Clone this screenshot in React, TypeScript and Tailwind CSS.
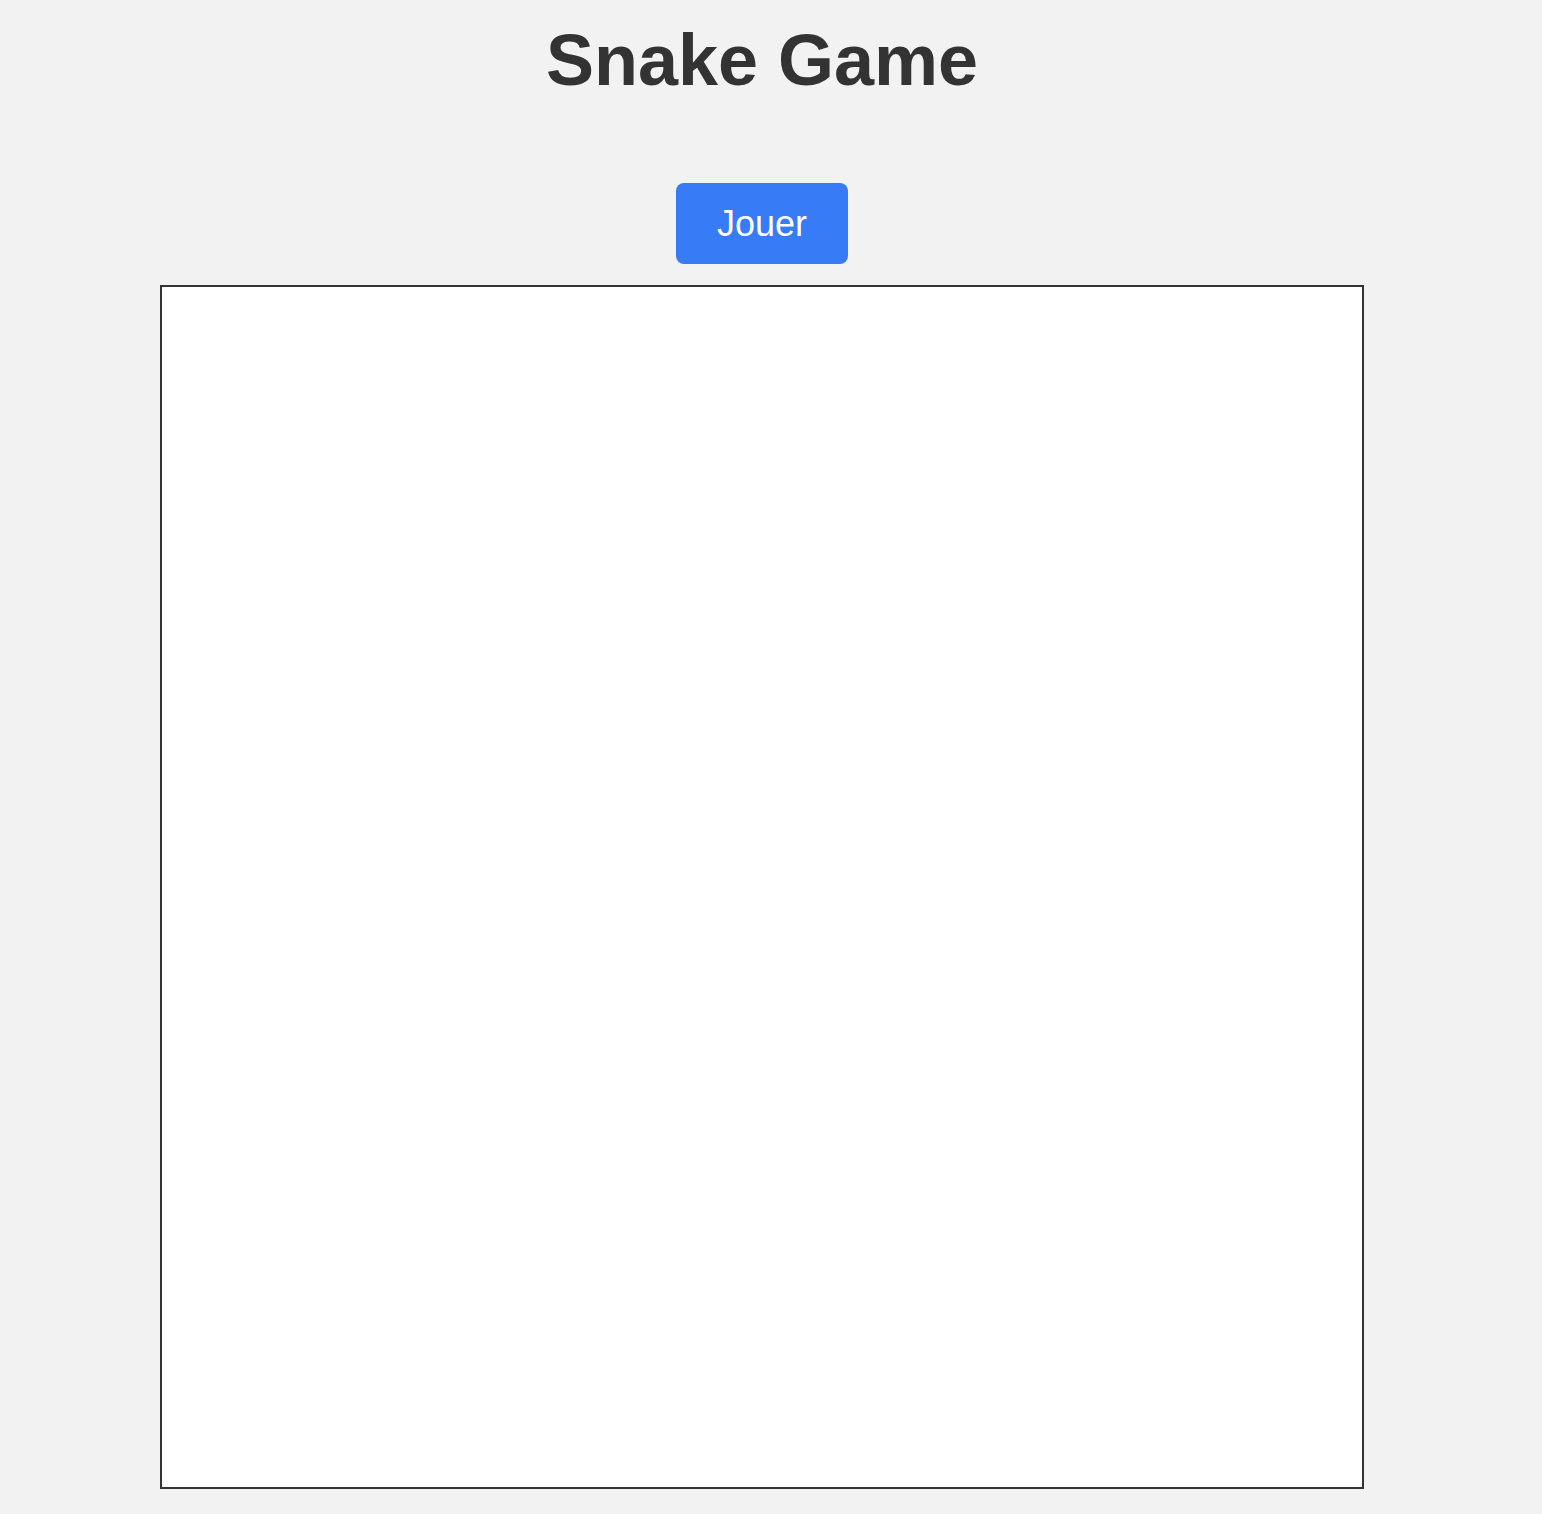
export default function App() {
  return (
    <div
      className="min-h-[1514px] w-full bg-[#f2f2f2]"
      style={{ fontFamily: '"Liberation Sans", Arial, sans-serif' }}
    >
      <div className="w-[1524px] flex flex-col items-center pt-[20px] pb-[26px]">
        <h1 className="text-[72px] leading-[80px] font-bold text-[#333333] m-0">Snake Game</h1>
        <button className="mt-[83px] bg-[#377bf6] text-white text-[36px] leading-[41px] px-[41px] py-[20px] rounded-[8px] border-0">
          Jouer
        </button>
        <div className="mt-[21px] w-[1204px] h-[1204px] bg-white border-2 border-[#333333]" />
      </div>
    </div>
  );
}
